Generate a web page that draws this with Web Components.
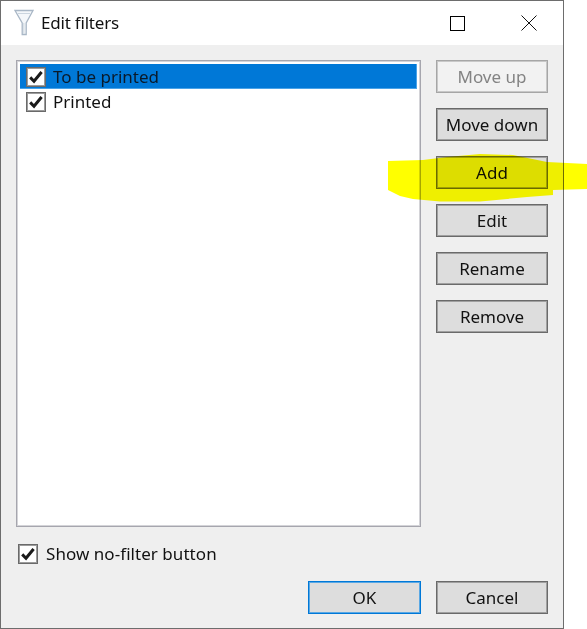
<!DOCTYPE html>
<html lang="en"><head><meta charset="utf-8"><title>Edit filters</title>
<style>
html,body{margin:0;padding:0;background:#fff;overflow:hidden}
body{font:17px/24px "Noto Sans","Open Sans",sans-serif;color:#111;width:587px;height:629px;position:relative}
</style></head><body>
<edit-window>
  <title-bar slot="title">Edit filters</title-bar>
  <list-box slot="list">
    <list-row selected>To be printed</list-row>
    <list-row>Printed</list-row>
  </list-box>
  <win-button slot="side" disabled>Move up</win-button>
  <win-button slot="side">Move down</win-button>
  <win-button slot="side">Add</win-button>
  <win-button slot="side">Edit</win-button>
  <win-button slot="side">Rename</win-button>
  <win-button slot="side">Remove</win-button>
  <check-label slot="option">Show no-filter button</check-label>
  <win-button slot="foot" default>OK</win-button>
  <win-button slot="foot">Cancel</win-button>
</edit-window>
<marker-stroke></marker-stroke>
<script>
function def(name, css, html){
  customElements.define(name, class extends HTMLElement{
    constructor(){super();this.attachShadow({mode:'open'}).innerHTML='<style>'+css+'</style>'+html;}
  });
}
def('edit-window',`
  :host{display:flex;flex-direction:column;box-sizing:border-box;width:564px;height:629px;border:1px solid #6d6d6d;background:#efefef}
  .body{flex:1;display:flex;flex-direction:column;padding:15px;min-height:0}
  .main{display:flex;gap:15px;height:467px}
  .side{display:flex;flex-direction:column;gap:15px}
  .opt{margin-top:17px;padding-left:2px;height:20px;display:flex}
  .foot{margin-top:17px;display:flex;justify-content:flex-end;gap:15px}
`,`<slot name="title"></slot>
<div class="body">
 <div class="main"><slot name="list"></slot><div class="side"><slot name="side"></slot></div></div>
 <div class="opt"><slot name="option"></slot></div>
 <div class="foot"><slot name="foot"></slot></div>
</div>`);
def('title-bar',`
  :host{display:flex;align-items:center;height:44px;background:#fff;flex:none;color:#111}
  .ico{width:20px;height:27px;margin-left:13px;margin-right:7px;flex:none;margin-top:-2px}
  .t{flex:1;white-space:nowrap;letter-spacing:-.2px}
  .b{height:44px;display:flex;align-items:center;justify-content:center;flex:none}
  .btns{display:flex}
  .mx{width:73px}.cl{width:69px}
`,`<svg class="ico" viewBox="0 0 20 27"><path d="M1 1.5H19L12.2 14V25.5H8.2V14Z" fill="#f4f7fa" stroke="#a9b7c6" stroke-width="1.3"/><path d="M4 4.5L16 4.5" stroke="#cbd5df"/><path d="M9.8 14V25" stroke="#d8dfe6" stroke-width="1.4"/></svg>
<span class="t"><slot></slot></span>
<div class="btns"><div class="b mx"><svg width="15" height="15"><rect x=".5" y=".5" width="14" height="14" fill="none" stroke="#000"/></svg></div>
<div class="b cl"><svg width="16" height="16"><path d="M.5.5L15.5 15.5M15.5.5L.5 15.5" stroke="#111" fill="none"/></svg></div></div>`);
def('list-box',`
  :host{display:block;box-sizing:border-box;width:405px;height:467px;border:1px solid #a6a6ae;box-shadow:inset 0 0 0 1px #d4d4d8;background:#fff;padding:3px}
`,`<slot></slot>`);
def('check-box',`
  :host{display:inline-block;box-sizing:border-box;width:20px;height:20px;border:1px solid #6a6a6a;box-shadow:inset 0 0 0 1px #9c9c9c;background:#fff;flex:none;padding:1px}
  svg{display:block}
`,`<svg width="16" height="16" viewBox="0 0 16 16"><path d="M2.2 8.4L6 12.2L13.6 3" fill="none" stroke="#1a1a1a" stroke-width="3"/></svg>`);
def('list-row',`
  :host{display:flex;align-items:center;box-sizing:border-box;height:25px;padding-left:6px;gap:7px;white-space:nowrap;color:#111}
  :host([selected]){background:#0078d7;box-shadow:inset -1px 0 #4aa3e8,inset 0 -1px #4aa3e8;color:#0a1a2a}
`,`<check-box></check-box><span><slot></slot></span>`);
def('check-label',`
  :host{display:flex;align-items:center;gap:8px;white-space:nowrap;color:#111;letter-spacing:.05px}
`,`<check-box></check-box><span><slot></slot></span>`);
def('win-button',`
  :host{display:flex;align-items:center;justify-content:center;box-sizing:border-box;width:112px;height:33px;border:1px solid #6a6a6a;box-shadow:inset 0 0 0 1px #a0a0a0;background:#ddd;color:#111;white-space:nowrap}
  :host([disabled]){border-color:#a6a6a6;box-shadow:inset 0 0 0 1px #c8c8c8;background:#f2f2f2;color:#838383}
  :host([default]){border-color:#0078d7;box-shadow:inset 0 0 0 1px #5aa8e4;width:113px}
`,`<slot></slot>`);
def('marker-stroke',`
  :host{position:absolute;left:0;top:0;width:587px;height:629px;pointer-events:none;mix-blend-mode:multiply}
  svg{display:block}
`,`<svg width="587" height="629"><path fill="#ff0" d="M388 161L423 160L447 157L480 154L513 155L547 162L587 164V189L553 190V195L527 197L480 201.5L440 201.5L413 199L400 196L388 190Z"/></svg>`);
</script>
</body></html>
